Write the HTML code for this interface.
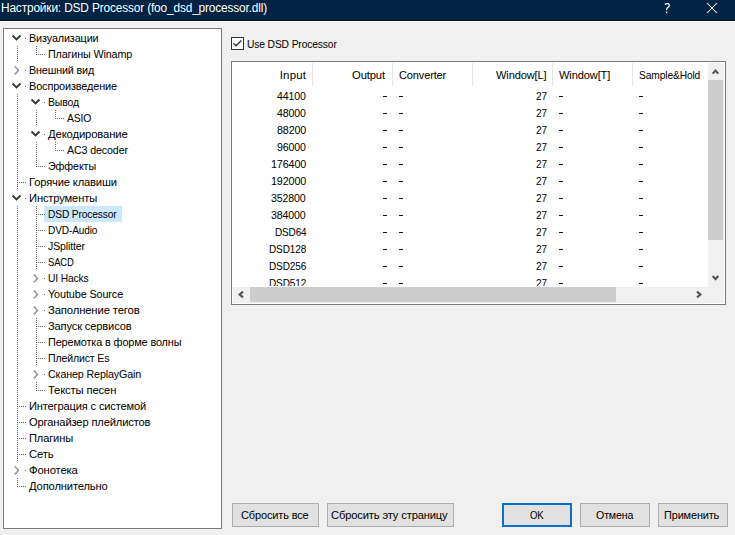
<!DOCTYPE html>
<html><head><meta charset="utf-8"><style>
*{margin:0;padding:0;box-sizing:border-box}
html,body{width:735px;height:535px;overflow:hidden;background:#f0f0f0;font-family:"Liberation Sans", sans-serif;font-size:11.5px;color:#000}
.abs{position:absolute}
.t{position:absolute;white-space:nowrap;transform-origin:0 0;-webkit-text-stroke:0.02px currentColor}
.btn{position:absolute;top:503px;height:24px;background:#e1e1e1;border:1px solid #adadad}
.def{border:2px solid #0a6fcc}
</style></head><body>
<div class="abs" style="left:0;top:0;width:735px;height:21px;background:#012444"></div>
<div class="abs" style="left:0;top:20px;width:735px;height:1px;background:#031526"></div>
<div class="abs" style="left:0;top:21px;width:735px;height:1px;background:#f7fbff"></div>
<svg class="abs" style="left:0;top:0" width="735" height="21">
<path d="M664.8 4.4Q666.6 3.1 668.5 3.7Q669.7 4.5 669.1 6.1Q668.6 7.1 667.2 8Q666.6 8.6 666.6 10.3" fill="none" stroke="#fff" stroke-width="1.25"/>
<rect x="666" y="11.6" width="1.3" height="1.5" fill="#fff"/>
<path d="M707 3L717 13M717 3L707 13" stroke="#fff" stroke-width="1.05"/>
</svg>
<div class="abs" style="left:3px;top:28px;width:219px;height:501px;border:1px solid #7a7a7a;background:#fff"></div>
<div class="abs" style="left:44px;top:206px;width:78px;height:16px;background:#cce8ff"></div>
<svg class="abs" style="left:0;top:0" width="735" height="535">
<path fill="#666" d="M17 46h1v1h-1zM17 48h1v1h-1zM17 50h1v1h-1zM17 52h1v1h-1zM17 54h1v1h-1zM17 56h1v1h-1zM17 58h1v1h-1zM17 60h1v1h-1zM17 94h1v1h-1zM17 96h1v1h-1zM17 98h1v1h-1zM17 100h1v1h-1zM17 102h1v1h-1zM17 104h1v1h-1zM17 106h1v1h-1zM17 108h1v1h-1zM17 110h1v1h-1zM17 112h1v1h-1zM17 114h1v1h-1zM17 116h1v1h-1zM17 118h1v1h-1zM17 120h1v1h-1zM17 122h1v1h-1zM17 124h1v1h-1zM17 126h1v1h-1zM17 128h1v1h-1zM17 130h1v1h-1zM17 132h1v1h-1zM17 134h1v1h-1zM17 136h1v1h-1zM17 138h1v1h-1zM17 140h1v1h-1zM17 142h1v1h-1zM17 144h1v1h-1zM17 146h1v1h-1zM17 148h1v1h-1zM17 150h1v1h-1zM17 152h1v1h-1zM17 154h1v1h-1zM17 156h1v1h-1zM17 158h1v1h-1zM17 160h1v1h-1zM17 162h1v1h-1zM17 164h1v1h-1zM17 166h1v1h-1zM17 168h1v1h-1zM17 170h1v1h-1zM17 172h1v1h-1zM17 174h1v1h-1zM17 176h1v1h-1zM17 178h1v1h-1zM17 180h1v1h-1zM17 182h1v1h-1zM17 184h1v1h-1zM17 186h1v1h-1zM17 188h1v1h-1zM17 206h1v1h-1zM17 208h1v1h-1zM17 210h1v1h-1zM17 212h1v1h-1zM17 214h1v1h-1zM17 216h1v1h-1zM17 218h1v1h-1zM17 220h1v1h-1zM17 222h1v1h-1zM17 224h1v1h-1zM17 226h1v1h-1zM17 228h1v1h-1zM17 230h1v1h-1zM17 232h1v1h-1zM17 234h1v1h-1zM17 236h1v1h-1zM17 238h1v1h-1zM17 240h1v1h-1zM17 242h1v1h-1zM17 244h1v1h-1zM17 246h1v1h-1zM17 248h1v1h-1zM17 250h1v1h-1zM17 252h1v1h-1zM17 254h1v1h-1zM17 256h1v1h-1zM17 258h1v1h-1zM17 260h1v1h-1zM17 262h1v1h-1zM17 264h1v1h-1zM17 266h1v1h-1zM17 268h1v1h-1zM17 270h1v1h-1zM17 272h1v1h-1zM17 274h1v1h-1zM17 276h1v1h-1zM17 278h1v1h-1zM17 280h1v1h-1zM17 282h1v1h-1zM17 284h1v1h-1zM17 286h1v1h-1zM17 288h1v1h-1zM17 290h1v1h-1zM17 292h1v1h-1zM17 294h1v1h-1zM17 296h1v1h-1zM17 298h1v1h-1zM17 300h1v1h-1zM17 302h1v1h-1zM17 304h1v1h-1zM17 306h1v1h-1zM17 308h1v1h-1zM17 310h1v1h-1zM17 312h1v1h-1zM17 314h1v1h-1zM17 316h1v1h-1zM17 318h1v1h-1zM17 320h1v1h-1zM17 322h1v1h-1zM17 324h1v1h-1zM17 326h1v1h-1zM17 328h1v1h-1zM17 330h1v1h-1zM17 332h1v1h-1zM17 334h1v1h-1zM17 336h1v1h-1zM17 338h1v1h-1zM17 340h1v1h-1zM17 342h1v1h-1zM17 344h1v1h-1zM17 346h1v1h-1zM17 348h1v1h-1zM17 350h1v1h-1zM17 352h1v1h-1zM17 354h1v1h-1zM17 356h1v1h-1zM17 358h1v1h-1zM17 360h1v1h-1zM17 362h1v1h-1zM17 364h1v1h-1zM17 366h1v1h-1zM17 368h1v1h-1zM17 370h1v1h-1zM17 372h1v1h-1zM17 374h1v1h-1zM17 376h1v1h-1zM17 378h1v1h-1zM17 380h1v1h-1zM17 382h1v1h-1zM17 384h1v1h-1zM17 386h1v1h-1zM17 388h1v1h-1zM17 390h1v1h-1zM17 392h1v1h-1zM17 394h1v1h-1zM17 396h1v1h-1zM17 398h1v1h-1zM17 400h1v1h-1zM17 402h1v1h-1zM17 404h1v1h-1zM17 406h1v1h-1zM17 408h1v1h-1zM17 410h1v1h-1zM17 412h1v1h-1zM17 414h1v1h-1zM17 416h1v1h-1zM17 418h1v1h-1zM17 420h1v1h-1zM17 422h1v1h-1zM17 424h1v1h-1zM17 426h1v1h-1zM17 428h1v1h-1zM17 430h1v1h-1zM17 432h1v1h-1zM17 434h1v1h-1zM17 436h1v1h-1zM17 438h1v1h-1zM17 440h1v1h-1zM17 442h1v1h-1zM17 444h1v1h-1zM17 446h1v1h-1zM17 448h1v1h-1zM17 450h1v1h-1zM17 452h1v1h-1zM17 454h1v1h-1zM17 456h1v1h-1zM17 458h1v1h-1zM17 460h1v1h-1zM17 478h1v1h-1zM17 480h1v1h-1zM17 482h1v1h-1zM17 484h1v1h-1zM17 486h1v1h-1zM19 182h1v1h-1zM19 406h1v1h-1zM19 422h1v1h-1zM19 438h1v1h-1zM19 454h1v1h-1zM19 486h1v1h-1zM21 182h1v1h-1zM21 406h1v1h-1zM21 422h1v1h-1zM21 438h1v1h-1zM21 454h1v1h-1zM21 486h1v1h-1zM23 182h1v1h-1zM23 406h1v1h-1zM23 422h1v1h-1zM23 438h1v1h-1zM23 454h1v1h-1zM23 486h1v1h-1zM25 38h1v1h-1zM25 70h1v1h-1zM25 86h1v1h-1zM25 182h1v1h-1zM25 198h1v1h-1zM25 406h1v1h-1zM25 422h1v1h-1zM25 438h1v1h-1zM25 454h1v1h-1zM25 470h1v1h-1zM25 486h1v1h-1zM36 46h1v1h-1zM36 48h1v1h-1zM36 50h1v1h-1zM36 52h1v1h-1zM36 54h1v1h-1zM36 110h1v1h-1zM36 112h1v1h-1zM36 114h1v1h-1zM36 116h1v1h-1zM36 118h1v1h-1zM36 120h1v1h-1zM36 122h1v1h-1zM36 124h1v1h-1zM36 142h1v1h-1zM36 144h1v1h-1zM36 146h1v1h-1zM36 148h1v1h-1zM36 150h1v1h-1zM36 152h1v1h-1zM36 154h1v1h-1zM36 156h1v1h-1zM36 158h1v1h-1zM36 160h1v1h-1zM36 162h1v1h-1zM36 164h1v1h-1zM36 166h1v1h-1zM36 206h1v1h-1zM36 208h1v1h-1zM36 210h1v1h-1zM36 212h1v1h-1zM36 214h1v1h-1zM36 216h1v1h-1zM36 218h1v1h-1zM36 220h1v1h-1zM36 222h1v1h-1zM36 224h1v1h-1zM36 226h1v1h-1zM36 228h1v1h-1zM36 230h1v1h-1zM36 232h1v1h-1zM36 234h1v1h-1zM36 236h1v1h-1zM36 238h1v1h-1zM36 240h1v1h-1zM36 242h1v1h-1zM36 244h1v1h-1zM36 246h1v1h-1zM36 248h1v1h-1zM36 250h1v1h-1zM36 252h1v1h-1zM36 254h1v1h-1zM36 256h1v1h-1zM36 258h1v1h-1zM36 260h1v1h-1zM36 262h1v1h-1zM36 264h1v1h-1zM36 266h1v1h-1zM36 268h1v1h-1zM36 318h1v1h-1zM36 320h1v1h-1zM36 322h1v1h-1zM36 324h1v1h-1zM36 326h1v1h-1zM36 328h1v1h-1zM36 330h1v1h-1zM36 332h1v1h-1zM36 334h1v1h-1zM36 336h1v1h-1zM36 338h1v1h-1zM36 340h1v1h-1zM36 342h1v1h-1zM36 344h1v1h-1zM36 346h1v1h-1zM36 348h1v1h-1zM36 350h1v1h-1zM36 352h1v1h-1zM36 354h1v1h-1zM36 356h1v1h-1zM36 358h1v1h-1zM36 360h1v1h-1zM36 362h1v1h-1zM36 364h1v1h-1zM36 382h1v1h-1zM36 384h1v1h-1zM36 386h1v1h-1zM36 388h1v1h-1zM36 390h1v1h-1zM38 54h1v1h-1zM38 166h1v1h-1zM38 214h1v1h-1zM38 230h1v1h-1zM38 246h1v1h-1zM38 262h1v1h-1zM38 326h1v1h-1zM38 342h1v1h-1zM38 358h1v1h-1zM38 390h1v1h-1zM40 54h1v1h-1zM40 166h1v1h-1zM40 214h1v1h-1zM40 230h1v1h-1zM40 246h1v1h-1zM40 262h1v1h-1zM40 326h1v1h-1zM40 342h1v1h-1zM40 358h1v1h-1zM40 390h1v1h-1zM42 54h1v1h-1zM42 166h1v1h-1zM42 214h1v1h-1zM42 230h1v1h-1zM42 246h1v1h-1zM42 262h1v1h-1zM42 326h1v1h-1zM42 342h1v1h-1zM42 358h1v1h-1zM42 390h1v1h-1zM44 54h1v1h-1zM44 102h1v1h-1zM44 134h1v1h-1zM44 166h1v1h-1zM44 214h1v1h-1zM44 230h1v1h-1zM44 246h1v1h-1zM44 262h1v1h-1zM44 278h1v1h-1zM44 294h1v1h-1zM44 310h1v1h-1zM44 326h1v1h-1zM44 342h1v1h-1zM44 358h1v1h-1zM44 374h1v1h-1zM44 390h1v1h-1zM55 110h1v1h-1zM55 112h1v1h-1zM55 114h1v1h-1zM55 116h1v1h-1zM55 118h1v1h-1zM55 142h1v1h-1zM55 144h1v1h-1zM55 146h1v1h-1zM55 148h1v1h-1zM55 150h1v1h-1zM57 118h1v1h-1zM57 150h1v1h-1zM59 118h1v1h-1zM59 150h1v1h-1zM61 118h1v1h-1zM61 150h1v1h-1zM63 118h1v1h-1zM63 150h1v1h-1z"/><polyline points="12.5,35.5 16.5,39.5 20.5,35.5" fill="none" stroke="#3a3a3a" stroke-width="1.9"/><polyline points="14.8,66.4 18.5,70.4 14.8,74.4" fill="none" stroke="#a0a0a0" stroke-width="1.7"/><polyline points="12.5,83.5 16.5,87.5 20.5,83.5" fill="none" stroke="#3a3a3a" stroke-width="1.9"/><polyline points="31.5,99.5 35.5,103.5 39.5,99.5" fill="none" stroke="#3a3a3a" stroke-width="1.9"/><polyline points="31.5,131.5 35.5,135.5 39.5,131.5" fill="none" stroke="#3a3a3a" stroke-width="1.9"/><polyline points="12.5,195.5 16.5,199.5 20.5,195.5" fill="none" stroke="#3a3a3a" stroke-width="1.9"/><polyline points="33.8,274.4 37.5,278.4 33.8,282.4" fill="none" stroke="#a0a0a0" stroke-width="1.7"/><polyline points="33.8,290.4 37.5,294.4 33.8,298.4" fill="none" stroke="#a0a0a0" stroke-width="1.7"/><polyline points="33.8,306.4 37.5,310.4 33.8,314.4" fill="none" stroke="#a0a0a0" stroke-width="1.7"/><polyline points="33.8,370.4 37.5,374.4 33.8,378.4" fill="none" stroke="#a0a0a0" stroke-width="1.7"/><polyline points="14.8,466.4 18.5,470.4 14.8,474.4" fill="none" stroke="#a0a0a0" stroke-width="1.7"/>
<rect x="231.5" y="37.5" width="12" height="12" fill="#fff" stroke="#333" stroke-width="1"/>
<polyline points="233.4,43.2 236,45.7 241.3,40.4" fill="none" stroke="#333" stroke-width="1.4"/>
</svg>
<div class="abs" style="left:231px;top:61px;width:495px;height:244px;border:1px solid #7a7a7a;background:#fff"></div>
<div class="abs" style="left:312px;top:63px;width:1px;height:23px;background:#e5e5e5"></div><div class="abs" style="left:392px;top:63px;width:1px;height:23px;background:#e5e5e5"></div><div class="abs" style="left:472px;top:63px;width:1px;height:23px;background:#e5e5e5"></div><div class="abs" style="left:552px;top:63px;width:1px;height:23px;background:#e5e5e5"></div><div class="abs" style="left:632px;top:63px;width:1px;height:23px;background:#e5e5e5"></div><div class="abs" style="left:712px;top:63px;width:1px;height:23px;background:#e5e5e5"></div>
<svg class="abs" style="left:0;top:0" width="735" height="535"><path fill="#111" d="M383 96h4v1h-4zM399 96h4v1h-4zM559 96h4v1h-4zM639 96h4v1h-4zM383 113h4v1h-4zM399 113h4v1h-4zM559 113h4v1h-4zM639 113h4v1h-4zM383 130h4v1h-4zM399 130h4v1h-4zM559 130h4v1h-4zM639 130h4v1h-4zM383 147h4v1h-4zM399 147h4v1h-4zM559 147h4v1h-4zM639 147h4v1h-4zM383 164h4v1h-4zM399 164h4v1h-4zM559 164h4v1h-4zM639 164h4v1h-4zM383 181h4v1h-4zM399 181h4v1h-4zM559 181h4v1h-4zM639 181h4v1h-4zM383 198h4v1h-4zM399 198h4v1h-4zM559 198h4v1h-4zM639 198h4v1h-4zM383 215h4v1h-4zM399 215h4v1h-4zM559 215h4v1h-4zM639 215h4v1h-4zM383 232h4v1h-4zM399 232h4v1h-4zM559 232h4v1h-4zM639 232h4v1h-4zM383 249h4v1h-4zM399 249h4v1h-4zM559 249h4v1h-4zM639 249h4v1h-4zM383 266h4v1h-4zM399 266h4v1h-4zM559 266h4v1h-4zM639 266h4v1h-4zM383 283h4v1h-4zM399 283h4v1h-4zM559 283h4v1h-4zM639 283h4v1h-4z"/></svg>
<div class="btn" style="left:232px;width:87px"></div>
<div class="btn" style="left:327px;width:127px"></div>
<div class="btn def" style="left:502px;width:70px"></div>
<div class="btn" style="left:580px;width:70px"></div>
<div class="btn" style="left:658px;width:70px"></div>
<div class="t" style="left:28.70px;top:30px;line-height:16px;font-size:11.5px;letter-spacing:-0.150px;color:#000;transform:scaleX(0.943);">Визуализации</div><div class="t" style="left:47.90px;top:46px;line-height:16px;font-size:11.5px;letter-spacing:-0.150px;color:#000;transform:scaleX(0.935);">Плагины Winamp</div><div class="t" style="left:28.70px;top:62px;line-height:16px;font-size:11.5px;letter-spacing:-0.150px;color:#000;transform:scaleX(0.934);">Внешний вид</div><div class="t" style="left:28.70px;top:78px;line-height:16px;font-size:11.5px;letter-spacing:-0.150px;color:#000;transform:scaleX(0.949);">Воспроизведение</div><div class="t" style="left:47.90px;top:94px;line-height:16px;font-size:11.5px;letter-spacing:-0.150px;color:#000;transform:scaleX(0.910);">Вывод</div><div class="t" style="left:66.80px;top:110px;line-height:16px;font-size:11.5px;letter-spacing:-0.150px;color:#000;transform:scaleX(0.900);">ASIO</div><div class="t" style="left:47.90px;top:126px;line-height:16px;font-size:11.5px;letter-spacing:-0.150px;color:#000;transform:scaleX(0.983);">Декодирование</div><div class="t" style="left:66.80px;top:142px;line-height:16px;font-size:11.5px;letter-spacing:-0.150px;color:#000;transform:scaleX(0.930);">AC3 decoder</div><div class="t" style="left:47.90px;top:158px;line-height:16px;font-size:11.5px;letter-spacing:-0.150px;color:#000;transform:scaleX(0.937);">Эффекты</div><div class="t" style="left:28.70px;top:174px;line-height:16px;font-size:11.5px;letter-spacing:-0.150px;color:#000;transform:scaleX(0.970);">Горячие клавиши</div><div class="t" style="left:28.70px;top:190px;line-height:16px;font-size:11.5px;letter-spacing:-0.150px;color:#000;transform:scaleX(0.971);">Инструменты</div><div class="t" style="left:47.90px;top:206px;line-height:16px;font-size:11.5px;letter-spacing:-0.150px;color:#000;transform:scaleX(0.887);">DSD Processor</div><div class="t" style="left:47.90px;top:222px;line-height:16px;font-size:11.5px;letter-spacing:-0.150px;color:#000;transform:scaleX(0.877);">DVD-Audio</div><div class="t" style="left:47.90px;top:238px;line-height:16px;font-size:11.5px;letter-spacing:-0.150px;color:#000;transform:scaleX(0.917);">JSplitter</div><div class="t" style="left:47.90px;top:254px;line-height:16px;font-size:11.5px;letter-spacing:-0.150px;color:#000;transform:scaleX(0.821);">SACD</div><div class="t" style="left:47.90px;top:270px;line-height:16px;font-size:11.5px;letter-spacing:-0.150px;color:#000;transform:scaleX(0.894);">UI Hacks</div><div class="t" style="left:47.90px;top:286px;line-height:16px;font-size:11.5px;letter-spacing:-0.150px;color:#000;transform:scaleX(0.946);">Youtube Source</div><div class="t" style="left:47.90px;top:302px;line-height:16px;font-size:11.5px;letter-spacing:-0.150px;color:#000;transform:scaleX(0.983);">Заполнение тегов</div><div class="t" style="left:47.90px;top:318px;line-height:16px;font-size:11.5px;letter-spacing:-0.150px;color:#000;transform:scaleX(0.967);">Запуск сервисов</div><div class="t" style="left:47.90px;top:334px;line-height:16px;font-size:11.5px;letter-spacing:-0.150px;color:#000;transform:scaleX(0.948);">Перемотка в форме волны</div><div class="t" style="left:47.90px;top:350px;line-height:16px;font-size:11.5px;letter-spacing:-0.150px;color:#000;transform:scaleX(0.916);">Плейлист Es</div><div class="t" style="left:47.90px;top:366px;line-height:16px;font-size:11.5px;letter-spacing:-0.150px;color:#000;transform:scaleX(0.933);">Сканер ReplayGain</div><div class="t" style="left:47.90px;top:382px;line-height:16px;font-size:11.5px;letter-spacing:-0.150px;color:#000;transform:scaleX(0.979);">Тексты песен</div><div class="t" style="left:28.70px;top:398px;line-height:16px;font-size:11.5px;letter-spacing:-0.150px;color:#000;transform:scaleX(0.963);">Интеграция с системой</div><div class="t" style="left:28.70px;top:414px;line-height:16px;font-size:11.5px;letter-spacing:-0.150px;color:#000;transform:scaleX(0.970);">Органайзер плейлистов</div><div class="t" style="left:28.70px;top:430px;line-height:16px;font-size:11.5px;letter-spacing:-0.150px;color:#000;transform:scaleX(0.965);">Плагины</div><div class="t" style="left:28.70px;top:446px;line-height:16px;font-size:11.5px;letter-spacing:-0.150px;color:#000;transform:scaleX(0.978);">Сеть</div><div class="t" style="left:28.70px;top:462px;line-height:16px;font-size:11.5px;letter-spacing:-0.150px;color:#000;transform:scaleX(0.981);">Фонотека</div><div class="t" style="left:28.70px;top:478px;line-height:16px;font-size:11.5px;letter-spacing:-0.150px;color:#000;transform:scaleX(0.973);">Дополнительно</div><div class="t" style="left:0.51px;top:0px;line-height:16px;font-size:12px;letter-spacing:-0.150px;color:#fff;transform:scaleX(0.989);-webkit-text-stroke:0;">Настройки: DSD Processor (foo_dsd_processor.dll)</div><div class="t" style="left:246.70px;top:36px;line-height:16px;font-size:11.5px;letter-spacing:-0.150px;color:#000;transform:scaleX(0.894);">Use DSD Processor</div><div class="t" style="left:279.70px;top:63px;line-height:25px;font-size:11.5px;letter-spacing:0.200px;color:#000;">Input</div><div class="t" style="left:352.40px;top:63px;line-height:25px;font-size:11.5px;letter-spacing:-0.150px;color:#000;transform:scaleX(0.981);">Output</div><div class="t" style="left:399.00px;top:63px;line-height:25px;font-size:11.5px;letter-spacing:-0.150px;color:#000;transform:scaleX(0.958);">Converter</div><div class="t" style="left:496.00px;top:63px;line-height:25px;font-size:11.5px;letter-spacing:-0.150px;color:#000;transform:scaleX(0.965);">Window[L]</div><div class="t" style="left:559.00px;top:63px;line-height:25px;font-size:11.5px;letter-spacing:-0.150px;color:#000;transform:scaleX(0.966);">Window[T]</div><div class="t" style="left:639.00px;top:63px;line-height:25px;font-size:11.5px;letter-spacing:-0.150px;color:#000;transform:scaleX(0.891);">Sample&amp;Hold</div><div class="t" style="left:277.00px;top:88px;line-height:17px;font-size:11.5px;letter-spacing:-0.150px;color:#000;transform:scaleX(0.917);">44100</div><div class="t" style="left:535.70px;top:88px;line-height:17px;font-size:11.5px;letter-spacing:-0.150px;color:#000;transform:scaleX(0.872);">27</div><div class="t" style="left:277.00px;top:105px;line-height:17px;font-size:11.5px;letter-spacing:-0.150px;color:#000;transform:scaleX(0.917);">48000</div><div class="t" style="left:535.70px;top:105px;line-height:17px;font-size:11.5px;letter-spacing:-0.150px;color:#000;transform:scaleX(0.872);">27</div><div class="t" style="left:276.50px;top:122px;line-height:17px;font-size:11.5px;letter-spacing:-0.150px;color:#000;transform:scaleX(0.933);">88200</div><div class="t" style="left:535.70px;top:122px;line-height:17px;font-size:11.5px;letter-spacing:-0.150px;color:#000;transform:scaleX(0.872);">27</div><div class="t" style="left:277.00px;top:139px;line-height:17px;font-size:11.5px;letter-spacing:-0.150px;color:#000;transform:scaleX(0.917);">96000</div><div class="t" style="left:535.70px;top:139px;line-height:17px;font-size:11.5px;letter-spacing:-0.150px;color:#000;transform:scaleX(0.872);">27</div><div class="t" style="left:270.86px;top:156px;line-height:17px;font-size:11.5px;letter-spacing:-0.150px;color:#000;transform:scaleX(0.938);">176400</div><div class="t" style="left:535.70px;top:156px;line-height:17px;font-size:11.5px;letter-spacing:-0.150px;color:#000;transform:scaleX(0.872);">27</div><div class="t" style="left:270.86px;top:173px;line-height:17px;font-size:11.5px;letter-spacing:-0.150px;color:#000;transform:scaleX(0.938);">192000</div><div class="t" style="left:535.70px;top:173px;line-height:17px;font-size:11.5px;letter-spacing:-0.150px;color:#000;transform:scaleX(0.872);">27</div><div class="t" style="left:271.40px;top:190px;line-height:17px;font-size:11.5px;letter-spacing:-0.150px;color:#000;transform:scaleX(0.923);">352800</div><div class="t" style="left:535.70px;top:190px;line-height:17px;font-size:11.5px;letter-spacing:-0.150px;color:#000;transform:scaleX(0.872);">27</div><div class="t" style="left:271.40px;top:207px;line-height:17px;font-size:11.5px;letter-spacing:-0.150px;color:#000;transform:scaleX(0.923);">384000</div><div class="t" style="left:535.70px;top:207px;line-height:17px;font-size:11.5px;letter-spacing:-0.150px;color:#000;transform:scaleX(0.872);">27</div><div class="t" style="left:274.60px;top:224px;line-height:17px;font-size:11.5px;letter-spacing:-0.150px;color:#000;transform:scaleX(0.868);">DSD64</div><div class="t" style="left:535.70px;top:224px;line-height:17px;font-size:11.5px;letter-spacing:-0.150px;color:#000;transform:scaleX(0.872);">27</div><div class="t" style="left:269.00px;top:241px;line-height:17px;font-size:11.5px;letter-spacing:-0.150px;color:#000;transform:scaleX(0.871);">DSD128</div><div class="t" style="left:535.70px;top:241px;line-height:17px;font-size:11.5px;letter-spacing:-0.150px;color:#000;transform:scaleX(0.872);">27</div><div class="t" style="left:269.00px;top:258px;line-height:17px;font-size:11.5px;letter-spacing:-0.150px;color:#000;transform:scaleX(0.871);">DSD256</div><div class="t" style="left:535.70px;top:258px;line-height:17px;font-size:11.5px;letter-spacing:-0.150px;color:#000;transform:scaleX(0.872);">27</div><div class="t" style="left:269.00px;top:275px;line-height:17px;font-size:11.5px;letter-spacing:-0.150px;color:#000;transform:scaleX(0.871);">DSD512</div><div class="t" style="left:535.70px;top:275px;line-height:17px;font-size:11.5px;letter-spacing:-0.150px;color:#000;transform:scaleX(0.872);">27</div><div class="t" style="left:240.70px;top:504px;line-height:22px;font-size:11.5px;letter-spacing:-0.150px;color:#000;transform:scaleX(0.957);">Сбросить все</div><div class="t" style="left:330.50px;top:504px;line-height:22px;font-size:11.5px;letter-spacing:-0.150px;color:#000;transform:scaleX(0.971);">Сбросить эту страницу</div><div class="t" style="left:529.70px;top:504px;line-height:22px;font-size:11.5px;letter-spacing:-0.150px;color:#000;transform:scaleX(0.831);">OK</div><div class="t" style="left:595.60px;top:504px;line-height:22px;font-size:11.5px;letter-spacing:-0.150px;color:#000;transform:scaleX(0.924);">Отмена</div><div class="t" style="left:664.10px;top:504px;line-height:22px;font-size:11.5px;letter-spacing:-0.150px;color:#000;transform:scaleX(0.950);">Применить</div>
<div class="abs" style="left:233px;top:286px;width:475px;height:1px;background:#fff"></div>
<div class="abs" style="left:708px;top:63px;width:16px;height:224px;background:#f0f0f0"></div>
<div class="abs" style="left:708px;top:80px;width:15px;height:160px;background:#cdcdcd"></div>
<div class="abs" style="left:233px;top:287px;width:491px;height:16px;background:#f0f0f0"></div>
<div class="abs" style="left:250px;top:287px;width:366px;height:15px;background:#cdcdcd"></div>
<div class="abs" style="left:233px;top:303px;width:491px;height:1px;background:#fff"></div>
<svg class="abs" style="left:0;top:0" width="735" height="535">
<polyline points="712.7,73.6 715.5,70.6 718.3,73.6" fill="none" stroke="#555" stroke-width="2.1"/>
<polyline points="712.7,276 715.5,279.2 718.3,276" fill="none" stroke="#555" stroke-width="2.1"/>
<polyline points="243,291.6 239.6,294.5 243,297.4" fill="none" stroke="#555" stroke-width="2.1"/>
<polyline points="697,291.6 700.4,294.5 697,297.4" fill="none" stroke="#555" stroke-width="2.1"/>
</svg>
</body></html>
